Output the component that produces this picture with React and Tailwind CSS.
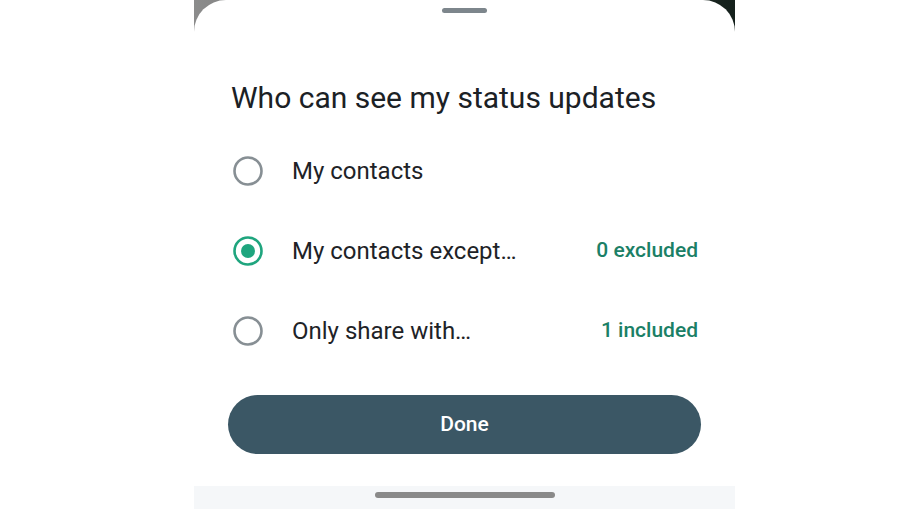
import React, { useState } from 'react';

const options = [
  { id: 'contacts', label: 'My contacts', note: null },
  { id: 'except', label: 'My contacts except…', note: '0 excluded' },
  { id: 'only', label: 'Only share with…', note: '1 included' },
];

function Radio({ checked }) {
  return (
    <svg width="30" height="30" viewBox="0 0 30 30" className="shrink-0">
      <circle
        cx="15"
        cy="15"
        r="13.5"
        fill="none"
        stroke={checked ? '#1fa57e' : '#878f94'}
        strokeWidth="2.6"
      />
      {checked && <circle cx="15" cy="15" r="7" fill="#1fa57e" />}
    </svg>
  );
}

export default function App() {
  const [selected, setSelected] = useState('except');

  return (
    <div className="w-full h-[509px] bg-white flex pl-[194px] font-['Roboto',sans-serif] overflow-hidden">
      <div className="w-[541px] h-full flex flex-col bg-gradient-to-r from-[#8c8c8c] via-[#56605c] to-[#14201b]">
        {/* bottom sheet */}
        <div className="flex-1 bg-white rounded-t-[32px] flex flex-col">
          <div className="mt-[8px] mx-auto w-[45px] h-[5px] rounded-full bg-[#7d868c]" />

          <h1 className="mt-[67px] pl-[37px] text-[30px] leading-[36px] text-[#1b2125]">
            Who can see my status updates
          </h1>

          <div className="mt-[15px] flex flex-col">
            {options.map((opt) => (
              <button
                key={opt.id}
                onClick={() => setSelected(opt.id)}
                className="h-[80px] flex items-center pl-[39px] pr-[37px] text-left"
              >
                <Radio checked={selected === opt.id} />
                <span className="ml-[29px] flex-1 text-[24px] text-[#1e2327]">{opt.label}</span>
                {opt.note && (
                  <span className="text-[21px] font-medium text-[#1b8066]">{opt.note}</span>
                )}
              </button>
            ))}
          </div>

          <div className="mt-[24px] px-[34px]">
            <button className="w-full h-[59px] rounded-full bg-[#3b5765] text-white text-[21px] font-medium">
              Done
            </button>
          </div>
        </div>

        {/* gesture nav bar */}
        <div className="h-[23px] bg-[#f5f7f9] flex justify-center pt-[6px]">
          <div className="w-[180px] h-[6px] rounded-full bg-[#8a8a8a]" />
        </div>
      </div>
    </div>
  );
}
